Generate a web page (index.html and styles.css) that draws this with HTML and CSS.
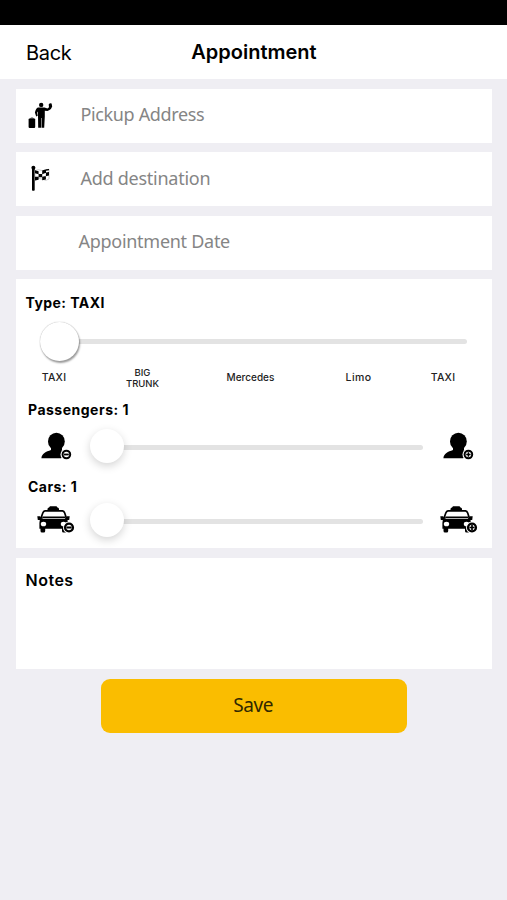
FILE: index.html
```html
<!DOCTYPE html>
<html lang="en">
<head>
<meta charset="utf-8">
<title>Appointment</title>
<link rel="stylesheet" href="styles.css">
</head>
<body>
<svg width="0" height="0" class="defs" aria-hidden="true">
  <symbol id="person" viewBox="0 0 32 30">
    <ellipse cx="15.4" cy="10.4" rx="8.4" ry="8.6"/>
    <path d="M.4 27.2C.8 22.400 5 20.800 10 19V15H21V19C24 20 26 21 28 23L20 27.200Z"/>
    <circle cx="25.400" cy="23.500" r="5.900" fill="#fff"/>
    <circle cx="25.400" cy="23.500" r="3.800" fill="#fff" stroke="#000" stroke-width="2"/>
  </symbol>
  <symbol id="taxi" viewBox="0 0 38 30">
    <path d="M10.500 5.500V4Q10.500 2.700 12 2.500L13 1.300H19.500L20.500 2.500Q22 2.700 22 4V5.500Z"/>
    <path d="M8 5.800H25.500Q27 6 27.700 8L29.800 14.500H3.500L5.800 8Q6.500 6 8 5.800Z" fill="#fff" stroke="#000" stroke-width="1.700"/>
    <path d="M5.500 11.500H28L29 15H4.500Z"/>
    <path d="M.3 11.200H3L4.500 13V15H.8ZM32.700 11.200H30L28.500 13V15H32.200Z"/>
    <path d="M3.500 14H29.800Q31 16 31 18V23.800H29.700V26Q29.700 27.500 28.200 27.500H26.500Q25 27.500 25 26V23.800H8.200V26Q8.200 27.500 6.700 27.500H5Q3.500 27.500 3.500 26V23.800H2.400V18Q2.400 16 3.500 14Z"/>
    <path d="M5.500 13.500H28" stroke="#fff" stroke-width=".7"/>
    <ellipse cx="6.500" cy="19" rx="2.700" ry="2.300" fill="#fff"/>
    <ellipse cx="26.500" cy="19" rx="2.700" ry="2.300" fill="#fff"/>
    <circle cx="32" cy="22.500" r="6" fill="#fff"/>
    <circle cx="32" cy="22.500" r="3.900" fill="#fff" stroke="#000" stroke-width="2.400"/>
  </symbol>
</svg>

<div class="status"></div>
<header class="nav">
  <span class="back">Back</span>
  <h1 class="title">Appointment</h1>
</header>

<main class="form">
  <section class="card field">
    <svg class="field-icon" width="26" height="28" viewBox="0 0 26 28">
      <rect x=".6" y="16.500" width="6.600" height="9.500" rx="1"/>
      <path d="M2.800 16.800V16H5.200V16.800" fill="none" stroke="#000" stroke-width=".7"/>
      <circle cx="13.200" cy="2.900" r="2.200"/>
      <path d="M10 5.600H16.500L19.500 6.400L21 5.200L20.700 2.500Q22 .5 23.600 1.600L24.200 4.600Q23.500 6.900 21.500 8L19.500 8.900L16.800 8.700V14.500L16.200 25.800H13.500V16H13V25.800H10.200L10 14V9.500L9.200 10.800L9.700 13.700L8.200 14.400L6.900 10.500Q8 6 10 5.600Z"/>
    </svg>
    <span class="placeholder w-pickup">Pickup Address</span>
  </section>
  <section class="card field">
    <svg class="field-icon" width="26" height="28" viewBox="0 0 26 28">
      <circle cx="5.400" cy="2.800" r="2"/>
      <path d="M4 3.500H6.700V25.300Q5.300 26.300 4 25.300Z"/>
      <path d="M7 5.500Q10.500 4 14 5.500T21 4V14Q18 16.500 14.500 14.300T7 15Z" fill="#fff" stroke="#999" stroke-width=".5"/>
      <path d="M7 5.200L10.600 6.300V9.200L7 8.200ZM14.200 5.600L18 4.200V7.700L14.200 9.200ZM10.600 8.900L14.200 8.700V12.200L10.600 12.300ZM17.900 7.600L21 7V10.500L17.900 11.200ZM7 11.800L10.600 11.500V14.800L7 15.500ZM14.200 11.700L17.900 11V14.600L14.200 15.300ZM17.900 4.200L21 4V5.200L17.900 5.800Z"/>
    </svg>
    <span class="placeholder w-dest">Add destination</span>
  </section>
  <section class="card field">
    <span class="placeholder date">Appointment Date</span>
  </section>

  <section class="card options">
    <h2 class="label label-type">Type: TAXI</h2>
    <div class="slider type-slider"><i class="knob big"></i><i class="track"></i></div>
    <div class="types">
      <span>TAXI</span><span class="small">BIG<br>TRUNK</span><span class="small">Mercedes</span><span>Limo</span><span>TAXI</span>
    </div>
    <h2 class="label label-pass">Passengers: 1</h2>
    <div class="row row-pass">
      <svg class="person" width="32" height="30" viewBox="0 0 32 30"><use href="#person"/><path d="M23 23.500H27.800" stroke="#000" stroke-width="1.800"/></svg>
      <div class="slider"><i class="knob"></i><i class="track"></i></div>
      <svg class="person" width="32" height="30" viewBox="0 0 32 30"><use href="#person"/><path d="M23.200 23.500H27.600M25.400 21.300V25.700" stroke="#000" stroke-width="1.500"/></svg>
    </div>
    <h2 class="label label-cars">Cars: 1</h2>
    <div class="row row-cars">
      <svg width="38" height="30" viewBox="0 0 38 30"><use href="#taxi"/><path d="M29.500 22.500H34.500" stroke="#000" stroke-width="2"/></svg>
      <div class="slider"><i class="knob"></i><i class="track"></i></div>
      <svg width="38" height="30" viewBox="0 0 38 30"><use href="#taxi"/><path d="M29.500 22.500H34.500M32 20V25" stroke="#000" stroke-width="1.700"/></svg>
    </div>
  </section>

  <section class="card notes"><h2 class="notes-title">Notes</h2></section>
  <button class="save" type="button"><span>Save</span></button>
</main>
</body>
</html>
```
FILE: styles.css
```css
* { box-sizing: border-box; }
body {
  margin: 0;
  min-height: 900px;
  background: #efeef3;
  color: #000;
  font-family: Inter, "Liberation Sans", sans-serif;
}
.defs { position: absolute; }
h1, h2 { margin: 0; }
svg { display: block; flex: none; }
.status { height: 25px; background: #000; }
.nav {
  height: 54px;
  background: #fff;
  display: grid;
  grid-template-columns: 1fr auto 1fr;
  align-items: center;
  padding: 0 25px;
  line-height: 24px;
}
.back { font-size: 20px; letter-spacing: -.3px; padding: 1px 0 0 1px; }
.title { font-size: 20px; font-weight: 600; padding-left: 1px; }
.form {
  display: flex;
  flex-direction: column;
  padding: 9.500px 15px 0 15.500px;
  gap: 10px;
}
.card { background: #fff; }
.field { height: 54px; display: flex; align-items: center; }
.field + .field { margin-top: -.5px; }
.field-icon { margin-left: 12.500px; }
.placeholder {
  font: 18px/24px "Noto Sans", sans-serif;
  color: #858585;
  white-space: nowrap;
  margin-left: 26.500px;
  padding-bottom: 3px;
}
.w-pickup { letter-spacing: -.36px; }
.w-dest { letter-spacing: -.26px; }
.date { margin-left: 63px; letter-spacing: -.28px; }
.options { height: 269px; margin-top: -.5px; }
.label { font-size: 14px; line-height: 18px; font-weight: 700; letter-spacing: .45px; padding-left: 10px; }
.label-type { padding-top: 14.500px; }
.slider { display: flex; align-items: center; }
.type-slider { height: 40px; margin: 9.500px 25px 0 24px; }
.track { flex: 1; height: 5px; border-radius: 3px; background: #e3e3e3; margin-left: -2px; }
.knob {
  width: 34px;
  height: 34px;
  flex: none;
  border-radius: 50%;
  background: #fff;
  box-shadow: 0 3px 9px rgba(0, 0, 0, .17);
  z-index: 1;
}
.row .track { margin-top: 2px; }
.knob.big { width: 39px; height: 39px; box-shadow: 0 0 1px #999, 1px 2px 2px rgba(0, 0, 0, .4); }
.types {
  display: grid;
  grid-template-columns: 77px 100px 116px 100px 69px;
  height: 33px;
  align-items: center;
  text-align: center;
  font-size: 10.500px;
  line-height: 11px;
  font-weight: 500;
  color: #222;
}
.types span:first-child, .types span:last-child { letter-spacing: .2px; }
.types .small { font-size: 9.500px; }
.types .small:nth-child(3) { font-size: 10px; }
.types span:nth-child(4) { letter-spacing: .4px; }
.label-pass, .label-cars { font-size: 14px; padding-left: 12.500px; }
.label-pass { margin-top: 7px; letter-spacing: .5px; }
.row { display: flex; align-items: center; }
.row .slider { flex: 1; }
.row-pass { height: 34px; margin-top: 10px; padding: 0 17px 0 25px; }
.row-pass .slider { margin: 0 20px 0 17px; }
.label-cars { margin-top: 15px; }
.row-cars { height: 34px; margin-top: 7px; padding: 0 14px 0 21px; }
.row-cars .slider { margin: 0 17px 0 15px; }
.notes { height: 111px; padding: 12px 10px; }
.notes-title { font-size: 16px; line-height: 20px; font-weight: 600; letter-spacing: .5px; }
.save {
  align-self: center;
  width: 306px;
  height: 54px;
  border: 0;
  border-radius: 9px;
  background: #fabd00;
  color: #302800;
  font: 19px/24px "Noto Sans", sans-serif;
  letter-spacing: -.4px;
  padding: 0 1px 3px 0;
}
```
